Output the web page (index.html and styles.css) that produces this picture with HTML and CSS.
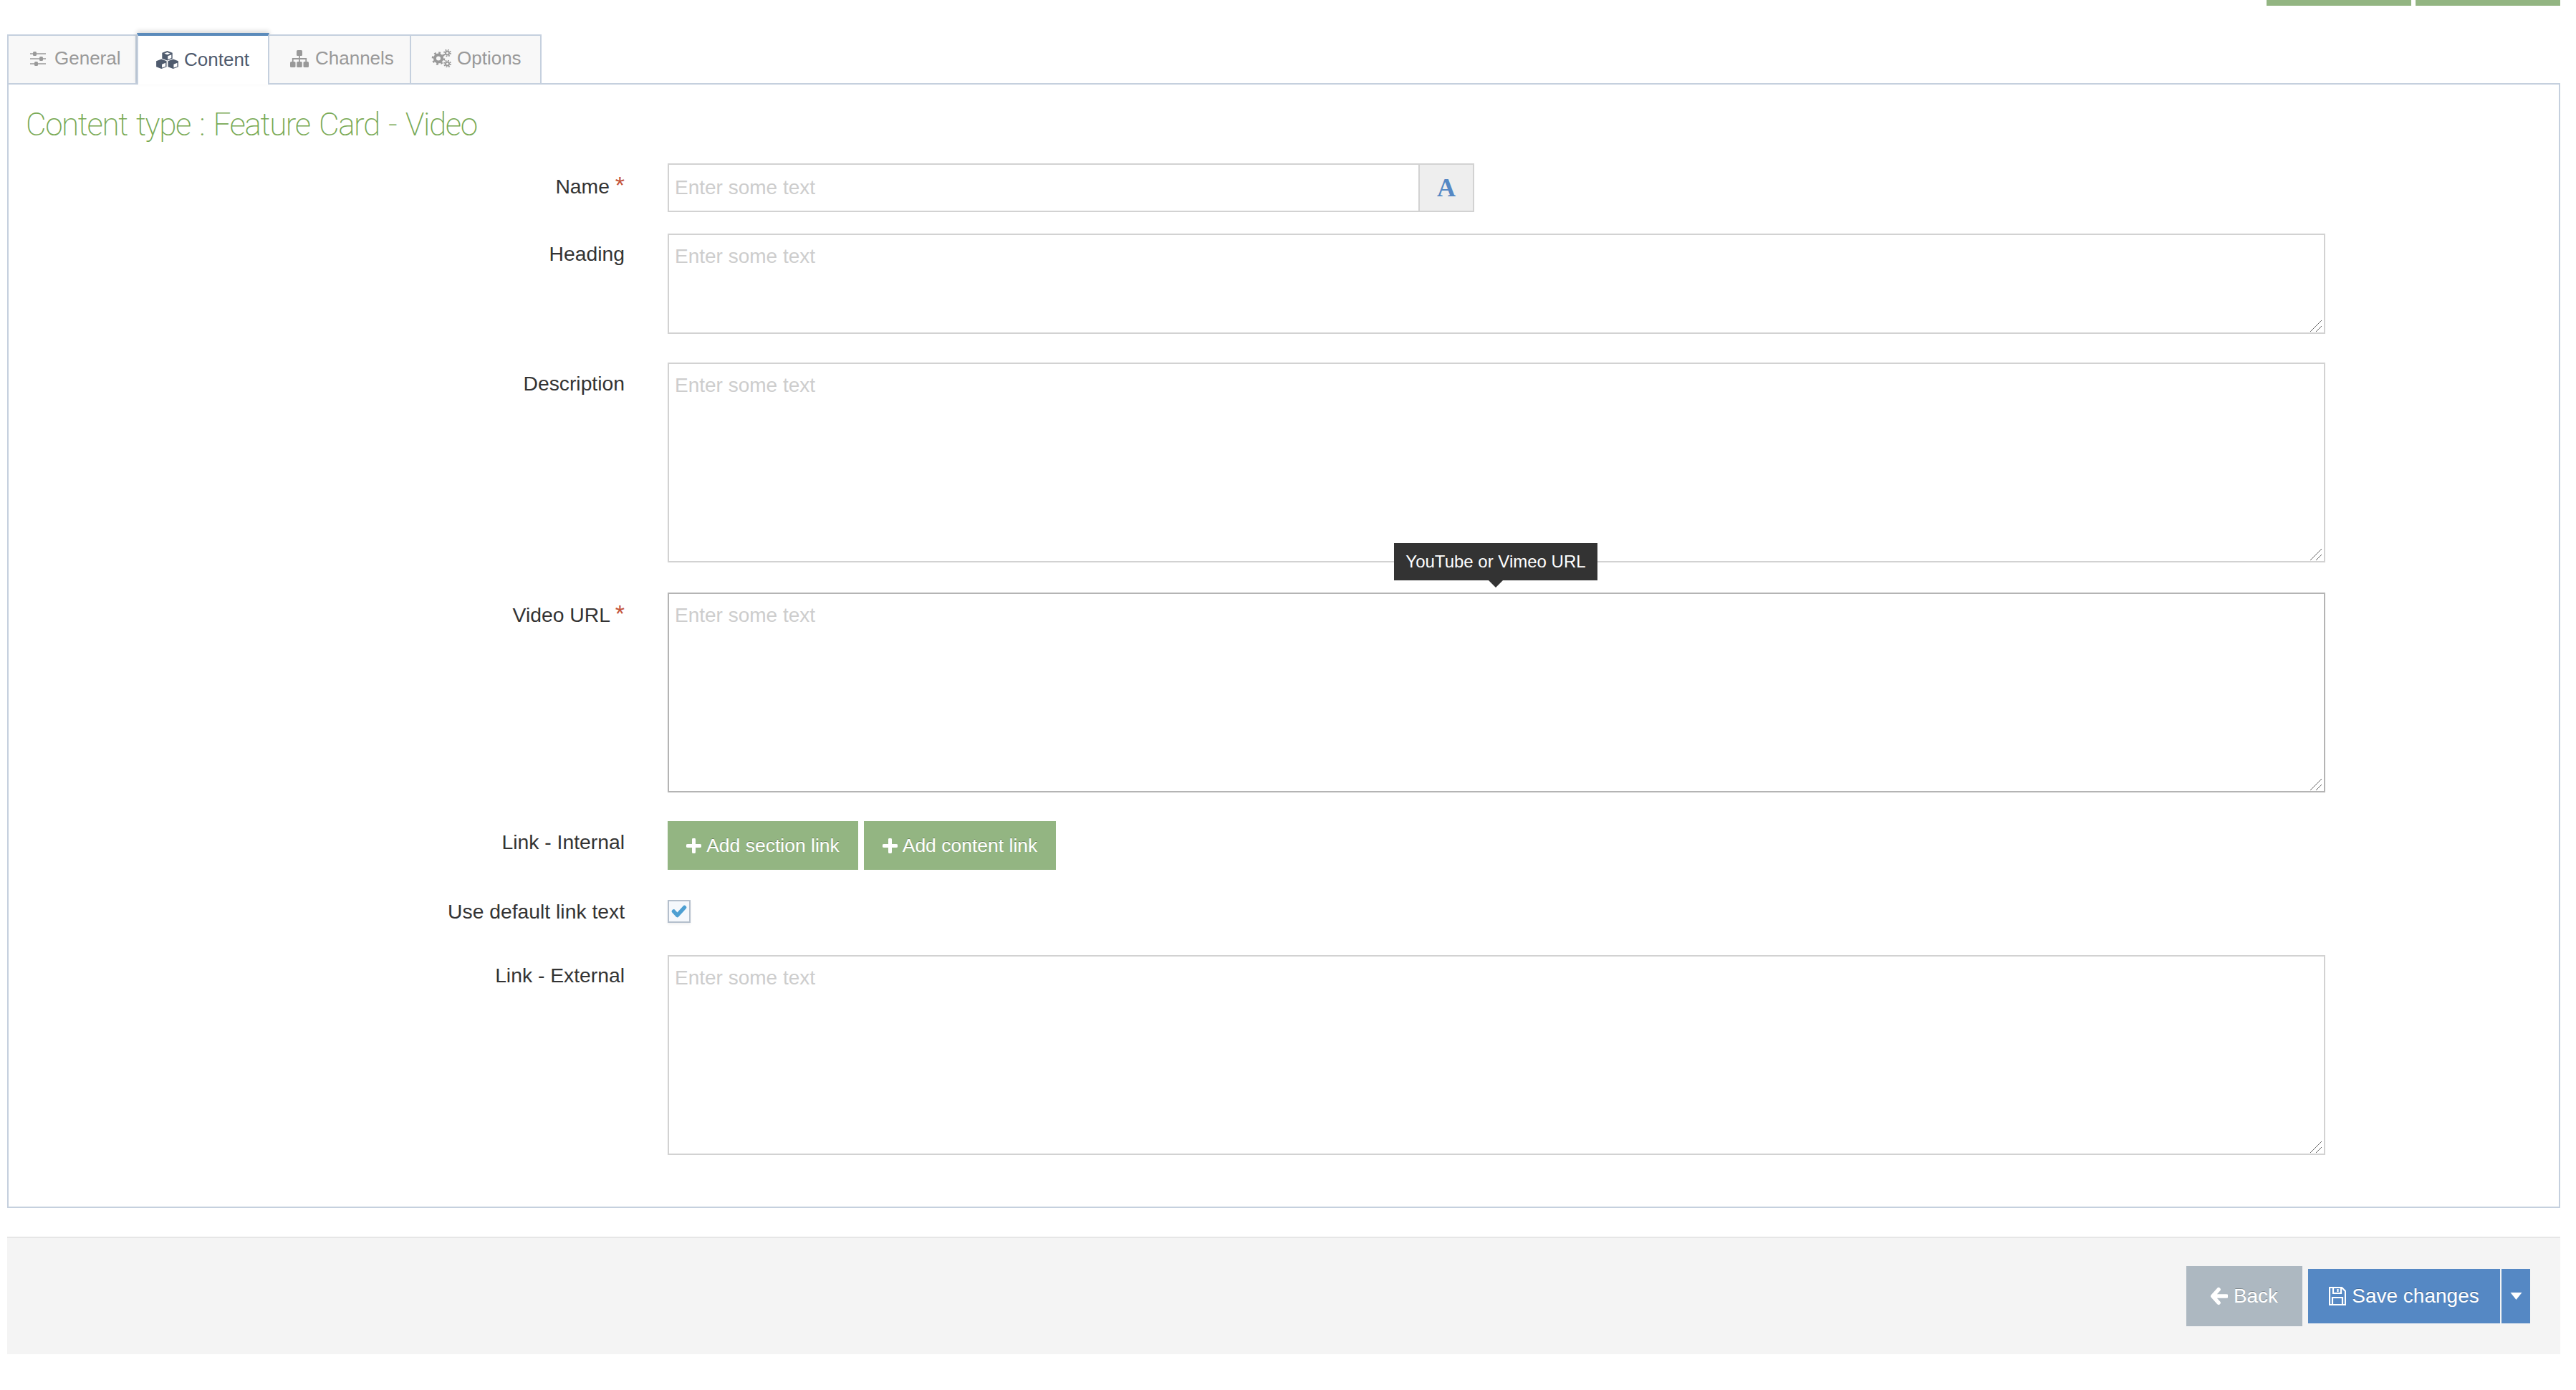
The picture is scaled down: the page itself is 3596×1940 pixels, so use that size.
FILE: index.html
```html
<!DOCTYPE html>
<html lang="en">
<head>
<meta charset="utf-8">
<title>Content type : Feature Card - Video</title>
<link rel="stylesheet" href="styles.css">
</head>
<body>
<div class="topbar"><span class="topbar-btn"></span><span class="topbar-btn"></span></div>
<nav class="tabs">
  <a class="tab tab-general">
    <svg class="tab-icon icon-sliders" viewBox="0 0 22 20"><path d="M0 3h22M0 10h22M0 17h22" stroke="currentColor" stroke-width="1.600" fill="none"/><rect x="4" y="0" width="5" height="6" rx="1.500" fill="currentColor"/><rect x="13" y="7" width="5" height="6" rx="1.500" fill="currentColor"/><rect x="6" y="14" width="5" height="6" rx="1.500" fill="currentColor"/></svg>
    General</a>
  <a class="tab tab-active tab-content">
    <svg class="tab-icon icon-cubes" viewBox="0 0 32 26"><g fill="currentColor"><path d="M16 0l7.500 2.800v8.400L16 14l-7.500-2.800V2.800z"/><path d="M7.500 12L15 14.800v8.400L7.500 26 0 23.200v-8.400z"/><path d="M24.500 12l7.500 2.800v8.400L24.500 26 17 23.200v-8.400z"/></g><g fill="#fff"><path d="M16.800 7.500l5.200-2v5l-5.200 2zM8.300 19.500l5.200-2v5l-5.200 2zM25.300 19.500l5.200-2v5l-5.200 2zM16 5.400l-4.300-1.600L16 2.200l4.300 1.600z"/></g></svg>
    Content</a>
  <a class="tab tab-channels">
    <svg class="tab-icon icon-sitemap" viewBox="0 0 26 24"><g fill="currentColor"><rect x="9" y="0" width="8" height="8" rx="1.500"/><rect x="0" y="16" width="7.500" height="8" rx="1.500"/><rect x="9.250" y="16" width="7.500" height="8" rx="1.500"/><rect x="18.500" y="16" width="7.500" height="8" rx="1.500"/></g><path d="M13 8v8M3.750 16v-4h18.500v4" stroke="currentColor" stroke-width="1.800" fill="none"/></svg>
    Channels</a>
  <a class="tab tab-options">
    <svg class="tab-icon icon-cogs" viewBox="0 0 28 25"><g fill="none" stroke="currentColor"><circle cx="10" cy="12.500" r="5" stroke-width="4"/><circle cx="10" cy="12.500" r="8" stroke-width="2.600" stroke-dasharray="2.800 3.480"/><circle cx="22.500" cy="5" r="2.500" stroke-width="2"/><circle cx="22.500" cy="5" r="4.500" stroke-width="1.800" stroke-dasharray="1.800 1.730"/><circle cx="22.500" cy="20" r="2.500" stroke-width="2"/><circle cx="22.500" cy="20" r="4.500" stroke-width="1.800" stroke-dasharray="1.800 1.730"/></g></svg>
    Options</a>
</nav>
<main class="panel">
  <h1 class="panel-title">Content type : Feature Card - Video</h1>
  <form class="form">
    <div class="row row-name">
      <label class="row-label">Name <span class="req">*</span></label>
      <div class="input-group">
        <input class="field field-name" type="text" placeholder="Enter some text">
        <span class="addon">A</span>
      </div>
    </div>
    <div class="row row-heading">
      <label class="row-label">Heading</label>
      <textarea class="field area area-heading" placeholder="Enter some text"></textarea>
    </div>
    <div class="row row-description">
      <label class="row-label">Description</label>
      <textarea class="field area area-tall" placeholder="Enter some text"></textarea>
    </div>
    <div class="row row-video">
      <label class="row-label">Video URL <span class="req">*</span></label>
      <div class="tip-wrap">
        <textarea class="field area area-tall area-focus" placeholder="Enter some text"></textarea>
        <div class="tooltip">YouTube or Vimeo URL</div>
      </div>
    </div>
    <div class="row row-links">
      <label class="row-label">Link - Internal</label>
      <div class="btn-row">
        <a class="btn-add btn-section"><svg class="plus" viewBox="0 0 21 21"><path d="M10.500 2v17M2 10.500h17" stroke="currentColor" stroke-width="5" stroke-linecap="round"/></svg>Add section link</a>
        <a class="btn-add btn-contentlink"><svg class="plus" viewBox="0 0 21 21"><path d="M10.500 2v17M2 10.500h17" stroke="currentColor" stroke-width="5" stroke-linecap="round"/></svg>Add content link</a>
      </div>
    </div>
    <div class="row row-check">
      <label class="row-label">Use default link text</label>
      <span class="checkbox"><svg viewBox="0 0 22 18"><path d="M3.500 9l5 5.500L18.500 3.500" fill="none" stroke="currentColor" stroke-width="5.500" stroke-linecap="round" stroke-linejoin="round"/></svg></span>
    </div>
    <div class="row row-external">
      <label class="row-label">Link - External</label>
      <textarea class="field area area-tall" placeholder="Enter some text"></textarea>
    </div>
  </form>
</main>
<footer class="actions">
  <a class="btn-back"><svg class="btn-icon" viewBox="0 0 26 26"><path d="M12 3L3 13l9 10M4 13h20" fill="none" stroke="currentColor" stroke-width="6" stroke-linejoin="round" stroke-linecap="round"/></svg>Back</a>
  <a class="btn-save"><svg class="btn-icon" viewBox="0 0 24 26"><path d="M1 1h17l5 5v19H1z M6 1v8h11V1 M5 25V15h14v10 M12.500 3v4" fill="none" stroke="currentColor" stroke-width="2.200"/></svg>Save changes</a>
  <a class="btn-caret"><svg viewBox="0 0 16 10"><path d="M0 0h16L8 10z" fill="currentColor"/></svg></a>
</footer>
</body>
</html>
```
FILE: styles.css
```css
* { box-sizing: border-box; }
html, body { margin: 0; padding: 0; background: #fff; }
body {
  width: 3596px;
  height: 1940px;
  overflow: hidden;
  font-family: "Liberation Sans", Arial, sans-serif;
  font-size: 28px;
  color: #333;
}
.topbar { height: 46px; display: flex; justify-content: flex-end; gap: 6px; padding-right: 22px; align-items: flex-start; }
.topbar-btn { width: 202px; height: 8px; background: #93b582; }
.tabs { height: 70px; display: flex; padding-left: 10px; align-items: flex-start; position: relative; z-index: 1; }
.tab {
  height: 70px;
  margin-top: 2px;
  display: flex;
  align-items: center;
  font-size: 26px;
  color: #999;
  background: #f8f8f8;
  border: 2px solid #c5d0de;
  border-left-width: 0;
  padding-bottom: 3px;
}
.tab-general { width: 181px; padding-left: 30px; gap: 12px; border-left-width: 2px; }
.tab-active {
  width: 185px;
  height: 72px;
  margin-top: 0;
  padding-top: 1px;
  padding-left: 25px;
  gap: 8px;
  color: #4f5b6e;
  background: #fff;
  border-top: 4px solid #5b8bbb;
  border-bottom: 0;
  border-left: 2px solid #c5d0de;
  border-right: 2px solid #c5d0de;
  box-shadow: 0 -3px 6px rgba(0, 0, 0, .14);
}
.tab-channels { width: 198px; padding-left: 29px; gap: 9px; }
.tab-options { width: 182px; padding-left: 28px; gap: 8px; }
.tab-icon { flex: none; }
.icon-sliders { width: 22px; height: 20px; }
.icon-cubes { width: 31px; height: 25px; }
.icon-sitemap { width: 26px; height: 24px; }
.icon-cogs { width: 28px; height: 25px; }
.panel {
  width: 3564px;
  height: 1570px;
  margin-left: 10px;
  background: #fff;
  border: 2px solid #c5d0de;
}
.panel-title {
  margin: 0;
  height: 110px;
  padding: 28px 0 0 24px;
  font-family: Roboto, "Liberation Sans", sans-serif;
  font-weight: 200;
  font-size: 44px;
  line-height: 56px;
  letter-spacing: -1.400px;
  word-spacing: 3px;
  color: #78a954;
}
.form { display: flex; flex-direction: column; }
.row {
  display: grid;
  grid-template-columns: 860px 2314px;
  column-gap: 60px;
  align-items: start;
}
.row-label { text-align: right; line-height: 32px; color: #333; font-size: 28.300px; }
.req { color: #c4553c; font-size: 34px; line-height: 0; }
.row-name .row-label { padding-top: 16px; }
.row-heading { margin-top: 30px; }
.row-heading .row-label { padding-top: 12px; }
.row-description { margin-top: 40px; }
.row-description .row-label { padding-top: 13px; }
.row-video { margin-top: 42px; }
.row-video .row-label { padding-top: 15px; }
.row-links { margin-top: 40px; }
.row-links .row-label { padding-top: 13px; }
.row-check { margin-top: 42px; }
.row-check .row-label { padding-top: 0; }
.row-external { margin-top: 45px; }
.row-external .row-label { padding-top: 12px; }
.input-group { display: flex; width: 1126px; height: 68px; }
.field {
  display: block;
  font: inherit;
  color: #333;
  background: #fff;
  border: 2px solid #d2d2d2;
  border-radius: 0;
  outline: 0;
  padding: 0 8px;
}
.field::placeholder { color: #cdcdcd; opacity: 1; }
.field-name { width: 1050px; height: 68px; padding-bottom: 1px; }
.addon {
  width: 76px;
  height: 68px;
  display: flex;
  align-items: center;
  justify-content: center;
  font-family: "Liberation Serif", serif;
  font-weight: bold;
  font-size: 36px;
  color: #5588c4;
  background: #eee;
  border: 2px solid #d2d2d2;
  border-left: 0;
}
.area {
  width: 2314px;
  padding: 14px 8px;
  resize: none;
  line-height: 32px;
  background-image: linear-gradient(135deg, transparent 47%, #666 47%, #666 53%, transparent 53%, transparent 72%, #666 72%, #666 78%, transparent 78%);
  background-size: 16px 16px;
  background-position: right 3px bottom 1px;
  background-repeat: no-repeat;
}
.area-heading { height: 140px; }
.area-tall { height: 279px; }
.area-focus { border-color: #b4b4b4; }
.tip-wrap { position: relative; height: 279px; }
.tooltip {
  position: absolute;
  top: -69px;
  left: 1014px;
  width: 284px;
  height: 52px;
  display: flex;
  align-items: center;
  justify-content: center;
  background: #333;
  color: #fff;
  font-size: 24px;
}
.tooltip::after {
  content: "";
  position: absolute;
  left: 132px;
  bottom: -10px;
  border-left: 10px solid transparent;
  border-right: 10px solid transparent;
  border-top: 10px solid #333;
}
.btn-row { display: flex; gap: 8px; }
.btn-add {
  height: 68px;
  display: flex;
  align-items: center;
  justify-content: center;
  gap: 7px;
  font-size: 26.500px;
  background: #93b582;
  color: #fff;
  text-shadow: 0 -1px 0 rgba(0, 0, 0, .25);
}
.btn-section { width: 266px; }
.btn-contentlink { width: 268px; }
.plus { width: 21px; height: 21px; flex: none; }
.checkbox {
  width: 32px;
  height: 32px;
  display: flex;
  align-items: center;
  justify-content: center;
  color: #4d9fd2;
  background: #f5f8fc;
  border: 2px solid #b4bfcc;
  box-shadow: 0 2px 3px rgba(0, 0, 0, .06);
}
.checkbox svg { width: 22px; height: 18px; }
.actions {
  width: 3564px;
  height: 164px;
  margin: 40px 0 0 10px;
  display: flex;
  align-items: center;
  justify-content: flex-end;
  padding-right: 42px;
  background: #f4f4f4;
  border-top: 2px solid #e6e6e6;
  color: #fff;
  text-shadow: 0 -1px 0 rgba(0, 0, 0, .25);
}
.btn-back, .btn-save, .btn-caret { display: flex; align-items: center; justify-content: center; }
.btn-back { width: 162px; height: 84px; gap: 8px; background: #adb8c1; margin-right: 8px; }
.btn-save { width: 268px; height: 76px; gap: 8px; background: #5588c4; margin-right: 2px; }
.btn-caret { width: 40px; height: 76px; background: #5588c4; }
.btn-caret svg { width: 17px; height: 10px; }
.btn-icon { width: 24px; height: 26px; flex: none; }
```
